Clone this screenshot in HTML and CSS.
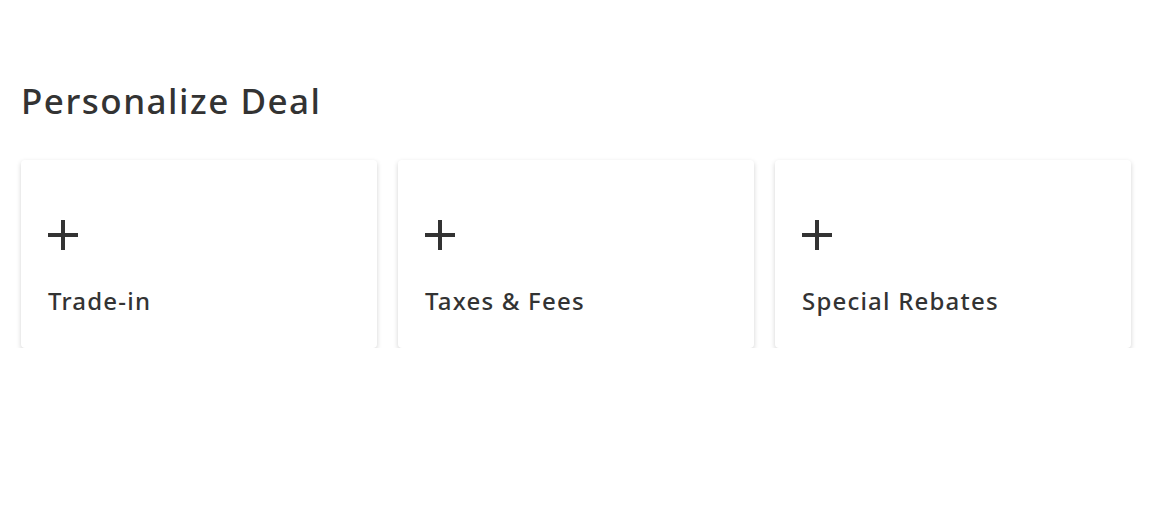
FILE: index.html
```html
<!DOCTYPE html>
<html lang="en">
<head>
    <meta charset="UTF-8">
    <meta name="viewport" content="width=device-width, initial-scale=1.0">
    <title>Personalize Deal</title>
    <link rel="stylesheet" href="styles.css">
</head>
<body>
    <div class="deal">
        <h2>Personalize Deal</h2>
        <div class="options">
            <div class="option">
                <span class="plus"></span>
                <span class="label">Trade-in</span>
            </div>
            <div class="option">
                <span class="plus"></span>
                <span class="label">Taxes &amp; Fees</span>
            </div>
            <div class="option">
                <span class="plus"></span>
                <span class="label">Special Rebates</span>
            </div>
        </div>
    </div>
</body>
</html>
```

FILE: styles.css
```css
body {
    margin: 0;
    padding: 0;
    font-family: "Noto Sans", "Open Sans", Arial, sans-serif;
    background: #fff;
    color: #333;
}

.deal {
    width: 1110px;
    padding: 77px 0 0 21px;
}

.deal h2 {
    font-size: 35px;
    font-weight: 500;
    letter-spacing: 1.5px;
    line-height: 48px;
    margin: 0 0 35px;
    color: #333;
}

.options {
    display: grid;
    grid-template-columns: repeat(3, 1fr);
    gap: 21px;
}

.option {
    height: 188px;
    background: #fff;
    border-radius: 4px;
    box-shadow: 0 2px 5px rgba(0, 0, 0, 0.18);
    padding: 60px 0 0 27px;
    box-sizing: border-box;
    display: flex;
    flex-direction: column;
    cursor: pointer;
}

.option .plus {
    position: relative;
    width: 30px;
    height: 30px;
    margin-bottom: 36px;
}

.option .plus::before,
.option .plus::after {
    content: "";
    position: absolute;
    background: #333;
}

.option .plus::before {
    left: 0;
    top: 13px;
    width: 30px;
    height: 4px;
}

.option .plus::after {
    left: 13px;
    top: 0;
    width: 4px;
    height: 30px;
}

.option .label {
    font-size: 24px;
    font-weight: 500;
    letter-spacing: 1.2px;
    line-height: 30px;
}
```
